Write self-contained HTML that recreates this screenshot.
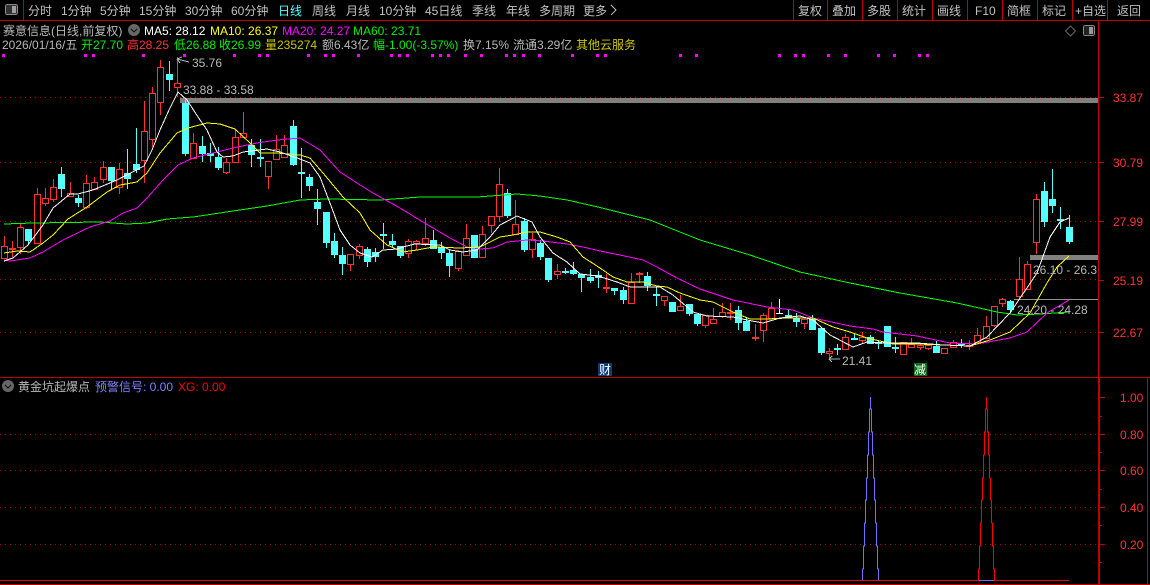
<!DOCTYPE html>
<html><head><meta charset="utf-8"><style>
html,body{margin:0;padding:0;background:#000;width:1150px;height:585px;overflow:hidden}
svg{display:block}
text{font-family:"Liberation Sans","WenQuanYi Zen Hei","Noto Sans CJK SC",sans-serif;font-size:12px;fill:#b8b8b8;white-space:pre}
.g{fill:#00f000}.r{fill:#ff3232}.y{fill:#ffff00}.m{fill:#ff00ff}.c{fill:#54ffff}.w{fill:#ffffff}.o{fill:#c8c800}.l{fill:#8080ff}.x{fill:#ff0000}
.ax{fill:#ff3232;font-size:12px}
.t{font-size:12px;fill:#c0c0c0}
circle{shape-rendering:geometricPrecision}
</style></head><body>
<svg width="1150" height="585" viewBox="0 0 1150 585" xmlns="http://www.w3.org/2000/svg" shape-rendering="crispEdges">
<rect width="1150" height="585" fill="#000"/>
<!-- dotted grid -->
<g stroke="#a01010" stroke-width="1" stroke-dasharray="1 4" fill="none">
<path d="M0 97.5H1098M0 162.5H1098M0 221.5H1098M0 279.5H1098M0 332.5H1098M0 434.5H1098M0 470.5H1098M0 507.5H1098M0 544.5H1098"/>
</g>
<!-- gray bars -->
<rect x="180" y="98" width="918" height="5" fill="#808080"/>
<rect x="1030" y="255" width="68" height="5" fill="#808080"/>
<rect x="1014" y="299" width="84" height="1" fill="#909090"/>
<!-- wicks -->
<path fill="none" stroke="#ff3232" d="M4.5 236V258M12.5 241V257M20.5 224V254M37.5 188V243M45.5 188V206M53.5 179V202M70.5 182V196M86.5 175V209M94.5 177V190M103.5 161V183M119.5 163V194M144.5 101V183M152.5 87V147M160.5 60V115M177.5 57V97M193.5 133V159M226.5 158V174M235.5 130V162M243.5 112V137M268.5 161V189M276.5 135V159M284.5 135V158M350.5 254V271M359.5 244V259M408.5 239V258M416.5 240V250M425.5 218V246M458.5 250V271M466.5 224V255M482.5 226V257M491.5 216V233M499.5 168V222M515.5 200V234M532.5 233V258M557.5 264V279M606.5 274V293M631.5 273V303M639.5 272V283M664.5 296V306M680.5 295V310M705.5 315V328M713.5 308V323M722.5 303V318M730.5 303V320M755.5 324V341M763.5 313V342M771.5 302V318M804.5 319V329M829.5 348V360M845.5 334V349M862.5 332V343M903.5 342V355M911.5 338V348M920.5 343V350M928.5 345V350M944.5 348V354M953.5 340V348M969.5 340V350M977.5 328V342M986.5 316V338M994.5 306V327M1002.5 298V307M1019.5 257V299M1027.5 261V289M1036.5 194V254"/>
<path fill="none" stroke="#54ffff" d="M28.5 229V245M61.5 167V197M78.5 195V207M111.5 167V190M127.5 149V189M136.5 128V173M169.5 61V91M185.5 100V156M202.5 136V162M210.5 143V162M218.5 147V170M251.5 139V167M260.5 139V167M293.5 120V166M301.5 148V198M309.5 174V191M317.5 189V225M326.5 212V248M334.5 233V258M342.5 247V275M367.5 247V267M375.5 248V262M383.5 223V249M392.5 234V247M400.5 246V258M433.5 230V249M441.5 242V259M449.5 250V277M474.5 235V258M507.5 189V218M524.5 218V252M540.5 240V260M548.5 258V282M565.5 268V274M573.5 262V275M581.5 274V292M590.5 269V283M598.5 271V288M614.5 288V295M623.5 287V304M647.5 272V291M656.5 287V306M672.5 302V312M689.5 304V316M697.5 314V326M738.5 306V330M746.5 318V331M788.5 310V318M796.5 313V327M812.5 315V330M821.5 328V355M837.5 344V355M854.5 333V340M870.5 335V344M878.5 340V349M887.5 326V347M895.5 337V353M936.5 341V353M961.5 339V348M1010.5 300V312M1044.5 182V227M1052.5 169V213M1060.5 207V229M1069.5 215V244"/>
<path fill="none" stroke="#fff" d="M779.5 299V313M776 313.5H783"/>
<!-- red bodies -->
<path fill="#000" stroke="#ff3232" d="M1.5 246.5h6V258.5h-6zM9.5 248.5h6v1h-6zM17.5 227.5h6V247.5h-6zM34.5 194.5h6V243.5h-6zM42.5 198.5h6V203.5h-6zM50.5 187.5h6V199.5h-6zM67.5 193.5h6V196.5h-6zM83.5 183.5h6V207.5h-6zM91.5 182.5h6V189.5h-6zM100.5 167.5h6V179.5h-6zM116.5 169.5h6V187.5h-6zM141.5 131.5h6V160.5h-6zM149.5 93.5h6V139.5h-6zM157.5 67.5h6V102.5h-6zM174.5 83.5h6V87.5h-6zM190.5 143.5h6V158.5h-6zM223.5 162.5h6V172.5h-6zM232.5 137.5h6V162.5h-6zM240.5 133.5h6V137.5h-6zM265.5 161.5h6V176.5h-6zM273.5 149.5h6V159.5h-6zM281.5 145.5h6V157.5h-6zM347.5 254.5h6V264.5h-6zM356.5 246.5h6V255.5h-6zM405.5 241.5h6V253.5h-6zM413.5 241.5h6V243.5h-6zM422.5 238.5h6V243.5h-6zM455.5 251.5h6V268.5h-6zM463.5 238.5h6V255.5h-6zM479.5 234.5h6V257.5h-6zM488.5 216.5h6V225.5h-6zM496.5 184.5h6V216.5h-6zM512.5 224.5h6V234.5h-6zM529.5 239.5h6V249.5h-6zM554.5 271.5h6V274.5h-6zM603.5 287.5h6v1h-6zM628.5 282.5h6V303.5h-6zM636.5 273.5h6v1h-6zM661.5 296.5h6V300.5h-6zM677.5 306.5h6V310.5h-6zM702.5 315.5h6V325.5h-6zM710.5 319.5h6V323.5h-6zM719.5 312.5h6V316.5h-6zM727.5 312.5h6v1h-6zM752.5 337.5h6v1h-6zM760.5 315.5h6V330.5h-6zM768.5 308.5h6V318.5h-6zM801.5 319.5h6V323.5h-6zM826.5 351.5h6V353.5h-6zM842.5 337.5h6V349.5h-6zM859.5 337.5h6V340.5h-6zM900.5 342.5h6V354.5h-6zM908.5 344.5h6V347.5h-6zM917.5 345.5h6V347.5h-6zM925.5 345.5h6V348.5h-6zM941.5 348.5h6V353.5h-6zM950.5 342.5h6V347.5h-6zM966.5 345.5h6v1h-6zM974.5 335.5h6V342.5h-6zM983.5 326.5h6V338.5h-6zM991.5 306.5h6V325.5h-6zM999.5 299.5h6V303.5h-6zM1016.5 279.5h6V296.5h-6zM1024.5 264.5h6V289.5h-6zM1033.5 199.5h6V242.5h-6z"/>
<!-- cyan bodies -->
<path fill="#54ffff" d="M25 229h7v12h-7zM58 174h7v15h-7zM75 198h7v5h-7zM108 167h7v14h-7zM124 173h7v6h-7zM133 164h7v6h-7zM166 74h7v6h-7zM182 103h7v51h-7zM199 146h7v8h-7zM207 153h7v3h-7zM215 157h7v11h-7zM248 145h7v10h-7zM257 157h7v2h-7zM290 126h7v39h-7zM298 172h7v2h-7zM306 177h7v9h-7zM314 202h7v7h-7zM323 212h7v31h-7zM331 241h7v14h-7zM339 255h7v9h-7zM364 249h7v13h-7zM372 252h7v5h-7zM380 234h7v2h-7zM389 241h7v4h-7zM397 246h7v10h-7zM430 240h7v9h-7zM438 247h7v6h-7zM446 253h7v13h-7zM471 235h7v23h-7zM504 193h7v23h-7zM521 221h7v29h-7zM537 243h7v14h-7zM545 258h7v22h-7zM562 271h7v2h-7zM570 270h7v4h-7zM578 274h7v4h-7zM587 277h7v4h-7zM595 275h7v3h-7zM611 288h7v3h-7zM620 290h7v10h-7zM644 276h7v10h-7zM653 294h7v2h-7zM669 302h7v10h-7zM686 304h7v10h-7zM694 314h7v10h-7zM735 310h7v13h-7zM743 321h7v10h-7zM785 315h7v3h-7zM793 318h7v4h-7zM809 319h7v11h-7zM818 328h7v25h-7zM834 348h7v2h-7zM851 338h7v2h-7zM867 337h7v7h-7zM875 342h7v2h-7zM884 326h7v21h-7zM892 347h7v2h-7zM933 346h7v7h-7zM958 343h7v2h-7zM1007 301h7v9h-7zM1041 191h7v31h-7zM1049 199h7v7h-7zM1057 219h7v2h-7zM1066 227h7v15h-7z"/>
<!-- MA lines -->
<g fill="none" stroke-width="1">
<polyline stroke="#00ff00" points="4,224 33,223 100,222 113,223 127,224 147,223 167,219 193,217 233,211 267,206 300,200 327,199 380,200 420,197 477,197 517,194 540,196 567,200 598,207 650,220 700,240 750,255 800,272 850,283 900,293 957,303 997,312 1017,315 1040,314 1069,312"/>
<polyline stroke="#ff00ff" points="4,260 10,261 30,258 43,252 63,240 90,227 110,221 123,213 137,208 147,198 163,180 178,165 193,158 213,153 233,148 257,143 277,140 300,138 320,150 340,172 357,183 373,193 400,208 423,222 450,238 467,247 480,249 493,248 507,242 527,240 543,241 567,244 583,247 600,251 620,255 643,260 657,267 677,278 700,289 733,300 767,307 793,310 813,318 850,326 873,329 883,332 917,336 950,343 977,344 1010,338 1027,332 1047,313 1069,300"/>
<polyline stroke="#ffff00" points="4,253 17,251 30,252 43,243 53,235 68,219 87,207 107,192 120,185 137,182 147,173 160,153 177,133 188,128 207,123 220,124 235,129 250,143 260,153 277,153 300,155 310,158 323,173 343,197 360,213 370,230 387,245 403,252 417,250 433,247 460,248 480,247 500,237 513,235 527,232 540,232 557,237 570,242 583,257 600,268 613,277 627,282 643,282 657,286 667,287 680,293 700,300 713,302 733,312 750,319 767,319 787,318 813,318 833,327 850,332 867,338 893,344 917,344 970,346 990,340 1010,332 1030,313 1047,283 1057,267 1069,256"/>
<polyline stroke="#ffffff" points="4,261 13,258 28,245 43,225 53,208 70,194 78,194 93,190 117,180 144,166 152,150 160,130 169,110 178,92 187,100 200,120 207,130 217,152 223,157 233,156 243,152 267,149 280,152 300,159 310,163 320,177 330,203 340,230 350,245 360,253 372,257 383,250 397,249 403,247 415,244 440,245 450,250 463,252 477,250 490,237 500,225 517,216 532,222 540,237 553,253 567,262 580,274 598,276 617,282 630,287 660,287 673,295 693,312 707,316 733,317 747,320 763,323 780,318 800,316 813,320 830,335 853,347 867,342 887,343 917,343 943,345 970,346 987,337 1010,313 1037,273 1050,237 1060,222 1069,218"/>
</g>
<!-- price annotations -->
<path fill="none" stroke="#b4b4b4" d="M177 59l12 3M177 59l5-2M177 59l3 4M829 359h11M829 359l3-3M829 359l3 3"/>
<text x="192" y="67">35.76</text>
<text x="183" y="94">33.88 - 33.58</text>
<text x="1033" y="274">26.10 - 26.3</text>
<text x="1017" y="314">24.20 - 24.28</text>
<text x="842" y="365">21.41</text>
<!-- badges -->
<rect x="598" y="363" width="14" height="13" fill="#0c3c78"/>
<text x="599" y="374" class="w">财</text>
<rect x="914" y="363" width="13" height="13" fill="#0a6e1e"/>
<text x="914" y="374" class="w">减</text>
<!-- magenta dots -->
<path fill="#ff00ff" d="M2 54h3v3h-3zM84 54h3v3h-3zM92 54h3v3h-3zM142 54h3v3h-3zM183 54h3v3h-3zM233 54h3v3h-3zM258 54h3v3h-3zM266 54h3v3h-3zM307 54h3v3h-3zM324 54h3v3h-3zM332 54h3v3h-3zM357 54h3v3h-3zM390 54h3v3h-3zM398 54h3v3h-3zM406 54h3v3h-3zM431 54h3v3h-3zM439 54h3v3h-3zM447 54h3v3h-3zM464 54h3v3h-3zM480 54h3v3h-3zM505 54h3v3h-3zM513 54h3v3h-3zM522 54h3v3h-3zM538 54h3v3h-3zM571 54h3v3h-3zM596 54h3v3h-3zM604 54h3v3h-3zM679 54h3v3h-3zM695 54h3v3h-3zM778 54h3v3h-3zM794 54h3v3h-3zM802 54h3v3h-3zM827 54h3v3h-3zM844 54h3v3h-3zM877 54h3v3h-3zM893 54h3v3h-3zM918 54h3v3h-3zM926 54h3v3h-3z"/>
<!-- lower indicator -->
<path fill="none" stroke="#7070ff" stroke-width="1" d="M862.5 580V569H863.5V546H864.5V523H865.5V500H866.5V478H867.5V455H868.5V432H869.5V409H870.5V397V409H871.5V432H872.5V455H873.5V478H874.5V500H875.5V523H876.5V546H877.5V569H878.5V580"/>
<rect x="0" y="580" width="1069" height="1" fill="#f00000"/>
<rect x="979" y="580" width="15" height="1" fill="#7070ff"/>
<path fill="none" stroke="#ff0000" stroke-width="1" d="M978.5 580V569H979.5V546H980.5V523H981.5V500H982.5V478H983.5V455H984.5V432H985.5V409H986.5V397V409H987.5V432H988.5V455H989.5V478H990.5V500H991.5V523H992.5V546H993.5V569H994.5V580"/>
<!-- frame -->
<g fill="#c00000">
<rect x="0" y="20" width="1150" height="1"/>
<rect x="23" y="0" width="1" height="20"/>
<rect x="793" y="0" width="1" height="20"/><rect x="827" y="0" width="1" height="20"/><rect x="862" y="0" width="1" height="20"/><rect x="897" y="0" width="1" height="20"/><rect x="932" y="0" width="1" height="20"/><rect x="967" y="0" width="1" height="20"/><rect x="1002" y="0" width="1" height="20"/><rect x="1037" y="0" width="1" height="20"/><rect x="1072" y="0" width="1" height="20"/><rect x="1107" y="0" width="1" height="20"/>
<rect x="0" y="377" width="1150" height="1"/>
<rect x="1098" y="21" width="1" height="356"/>
<rect x="1098" y="378" width="2" height="207"/>
<rect x="1147" y="378" width="1" height="207"/>
<rect x="0" y="584" width="1150" height="1"/>
<path d="M1099 97h5v1h-5zM1099 162h5v1h-5zM1099 221h5v1h-5zM1099 280h5v1h-5zM1099 332h5v1h-5zM1100 397h5v1h-5zM1100 434h5v1h-5zM1100 470h5v1h-5zM1100 507h5v1h-5zM1100 544h5v1h-5zM1100 416h2v1h-2zM1100 452h2v1h-2zM1100 489h2v1h-2zM1100 525h2v1h-2zM1100 562h2v1h-2z"/>
</g>
<!-- top-left icon -->
<rect x="5.5" y="4.5" width="12" height="10" rx="2" fill="#333" stroke="#8c8c8c"/>
<rect x="12" y="6" width="4" height="7" fill="#a0a0a0"/>
<!-- nav -->
<g class="t">
<text class="t" x="28" y="15">分时</text>
<text class="t" x="61" y="15">1分钟</text>
<text class="t" x="100" y="15">5分钟</text>
<text class="t" x="139" y="15">15分钟</text>
<text class="t" x="185" y="15">30分钟</text>
<text class="t" x="231" y="15">60分钟</text>
<text class="c" x="278" y="15">日线</text>
<text class="t" x="312" y="15">周线</text>
<text class="t" x="346" y="15">月线</text>
<text class="t" x="379" y="15">10分钟</text>
<text class="t" x="425" y="15">45日线</text>
<text class="t" x="472" y="15">季线</text>
<text class="t" x="506" y="15">年线</text>
<text class="t" x="539" y="15">多周期</text>
<text class="t" x="583" y="15">更多</text>
<path d="M611 5l5 5-5 5" fill="none" stroke="#b4b4b4"/>
<text class="t" x="798" y="15">复权</text>
<text class="t" x="832" y="15">叠加</text>
<text class="t" x="867" y="15">多股</text>
<text class="t" x="902" y="15">统计</text>
<text class="t" x="937" y="15">画线</text>
<text class="t" x="975" y="15">F10</text>
<text class="t" x="1007" y="15">简框</text>
<text class="t" x="1042" y="15">标记</text>
<text class="t" x="1075" y="15">+自选</text>
<text class="t" x="1117" y="15">返回</text>
</g>
<!-- info row 1 -->
<text x="3" y="35">赛意信息(日线,前复权)</text>
<circle cx="134" cy="30" r="6" fill="#666"/>
<path d="M131 29l3 3 3-3" fill="none" stroke="#111" stroke-width="1.2"/>
<text class="w" x="144" y="35">MA5: 28.12</text>
<text class="y" x="210" y="35">MA10: 26.37</text>
<text class="m" x="282" y="35">MA20: 24.27</text>
<text class="g" x="353" y="35">MA60: 23.71</text>
<!-- info row 2 -->
<text x="2" y="49">2026/01/16/五</text>
<text class="g" x="81" y="49">开27.70</text>
<text class="r" x="127" y="49">高28.25</text>
<text class="g" x="174" y="49">低26.88</text>
<text class="g" x="219" y="49">收26.99</text>
<text class="o" x="265" y="49">量235274</text>
<text x="322" y="49">额6.43亿</text>
<text class="g" x="373" y="49">幅-1.00(-3.57%)</text>
<text x="463" y="49">换7.15%</text>
<text x="513" y="49">流通3.29亿</text>
<text class="o" x="576" y="49">其他云服务</text>
<!-- top-right icons -->
<path d="M1070.5 26l5 5-5 5-5-5z" fill="none" stroke="#666" shape-rendering="geometricPrecision"/>
<rect x="1083.5" y="25.5" width="11" height="10" rx="2" fill="#222" stroke="#888"/>
<rect x="1089" y="27" width="4" height="7" fill="#999"/>
<!-- axis labels -->
<text class="ax" x="1113" y="102">33.87</text>
<text class="ax" x="1113" y="167">30.79</text>
<text class="ax" x="1113" y="226">27.99</text>
<text class="ax" x="1113" y="285">25.19</text>
<text class="ax" x="1113" y="337">22.67</text>
<text class="ax" x="1120" y="402">1.00</text>
<text class="ax" x="1120" y="439">0.80</text>
<text class="ax" x="1120" y="475">0.60</text>
<text class="ax" x="1120" y="512">0.40</text>
<text class="ax" x="1120" y="549">0.20</text>
<!-- lower title -->
<circle cx="8" cy="386" r="6" fill="#666"/>
<path d="M5 385l3 3 3-3" fill="none" stroke="#111" stroke-width="1.2"/>
<text x="18" y="391">黄金坑起爆点</text>
<text class="l" x="95" y="391">预警信号: 0.00</text>
<text class="x" x="178" y="391">XG: 0.00</text>
</svg>
</body></html>
